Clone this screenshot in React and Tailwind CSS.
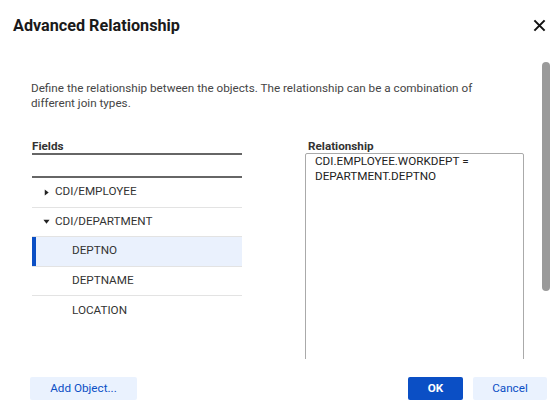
import React from 'react'

const rows = [
  { label: 'CDI/EMPLOYEE', kind: 'group', open: false },
  { label: 'CDI/DEPARTMENT', kind: 'group', open: true },
  { label: 'DEPTNO', kind: 'field', selected: true },
  { label: 'DEPTNAME', kind: 'field' },
  { label: 'LOCATION', kind: 'field', last: true },
]

function Caret({ open }) {
  return (
    <svg viewBox="0 0 8 8" className="w-[7px] h-[7px] text-[#222]">
      {open ? <polygon points="0.5,2 7.5,2 4,6.5" fill="currentColor" /> : <polygon points="2,0.5 6.5,4 2,7.5" fill="currentColor" />}
    </svg>
  )
}

function TreeRow({ row }) {
  return (
    <div
      className={
        'relative flex items-center h-[29.5px] text-[11.7px] text-[#333] ' +
        (row.last ? '' : 'border-b border-[#e3e3e3] ') +
        (row.selected ? 'bg-[#eaf1fd]' : '')
      }
    >
      {row.selected && <span className="absolute left-0 top-0 bottom-0 w-[4px] bg-[#0b4fc5]" />}
      {row.kind === 'group' ? (
        <div className="flex items-center pl-[11px] gap-[5px]">
          <Caret open={row.open} />
          <span>{row.label}</span>
        </div>
      ) : (
        <span className="pl-[40px]">{row.label}</span>
      )}
    </div>
  )
}

export default function App() {
  return (
    <div className="w-[556px] h-[413px] bg-white flex flex-col overflow-hidden" style={{ fontFamily: 'Roboto, "Liberation Sans", sans-serif' }}>
      <div className="flex items-center justify-between h-[50px] pl-[13px] pr-[10px]">
        <h1 className="text-[16.2px] font-bold text-[#1a1a1a] mt-[3px]">Advanced Relationship</h1>
        <svg viewBox="0 0 14 14" className="w-[13px] h-[13px] mt-[1px]">
          <path d="M1.5 1.5 L12.5 12.5 M12.5 1.5 L1.5 12.5" stroke="#111" strokeWidth="2.2" />
        </svg>
      </div>

      <div className="relative h-[309px] overflow-hidden">
        <div className="absolute right-[6px] top-[12px] w-[8px] h-[229px] rounded-full bg-[#9a9a9a]" />
        <div className="pl-[31px] pr-[40px] pt-[31px]">
          <p className="text-[11.7px] leading-[15px] text-[#454545]">
            Define the relationship between the objects. The relationship can be a combination of different join types.
          </p>
          <div className="flex gap-[65px] mt-[28px] pl-[1px]">
            <div className="w-[210px] shrink-0">
              <div className="text-[11.7px] font-bold text-[#333] leading-[14px] h-[14px]">Fields</div>
              <div className="border-b-2 border-[#666] h-0" />
              <div className="h-[21px]" />
              <div className="border-b-2 border-[#666] h-0" />
              {rows.map((r) => (
                <TreeRow key={r.label} row={r} />
              ))}
            </div>
            <div className="w-[219px] shrink-0 -ml-[2px]">
              <div className="text-[11.7px] font-bold text-[#333] leading-[14px] h-[14px] pl-[3px]">Relationship</div>
              <div className="border border-[#aaa] rounded-t-[2px] h-[230px] px-[9px] text-[11.7px] leading-[15px] text-[#222]">
                CDI.EMPLOYEE.WORKDEPT =<br />DEPARTMENT.DEPTNO
              </div>
            </div>
          </div>
        </div>
      </div>

      <div className="flex items-center justify-between pl-[30px] pr-[9px] pt-[18px]">
        <button className="h-[23px] w-[107px] rounded-[2px] bg-[#eaf2fe] text-[11.7px] text-[#0b4fc5]">Add Object...</button>
        <div className="flex gap-[10px]">
          <button className="h-[23px] w-[55px] rounded-[2px] bg-[#0b4fc5] text-[11.7px] font-bold text-white">OK</button>
          <button className="h-[23px] w-[74px] rounded-[2px] bg-[#eaf2fe] text-[11.7px] text-[#0b4fc5]">Cancel</button>
        </div>
      </div>
    </div>
  )
}
